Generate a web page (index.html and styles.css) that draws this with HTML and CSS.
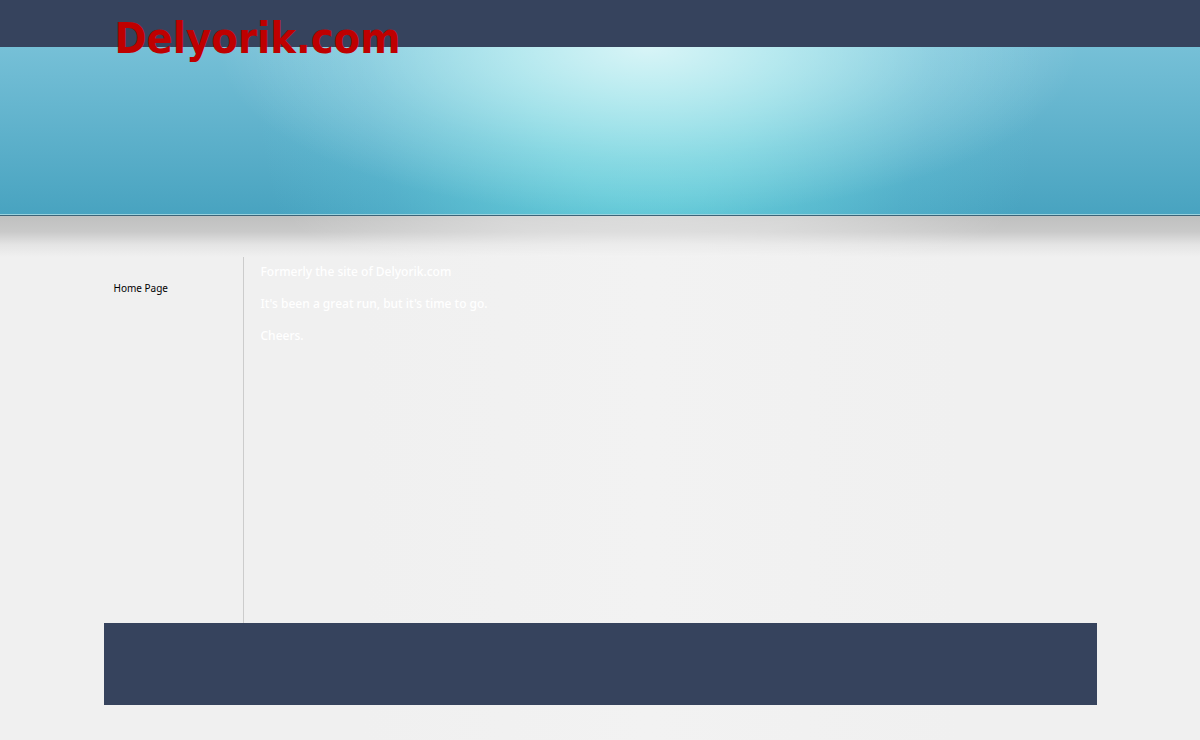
FILE: index.html
```html
<!DOCTYPE html>
<html lang="en">
<head>
    <meta charset="UTF-8">
    <meta name="viewport" content="width=device-width, initial-scale=1.0">
    <title>Delyorik.com</title>
    <link rel="stylesheet" href="styles.css">
</head>
<body>
    <header class="header">
        <div class="wrap">
            <h1 class="title">Delyorik.com</h1>
        </div>
    </header>
    <div class="shadow"></div>

    <div class="wrap columns">
        <nav class="menu">
            <a href="#">Home Page</a>
        </nav>
        <main class="content">
            <p>Formerly the site of Delyorik.com</p>
            <p>It's been a great run, but it's time to go.</p>
            <p>Cheers.</p>
        </main>
    </div>

    <footer class="wrap footer"></footer>
</body>
</html>
```

FILE: styles.css
```css
* {
    box-sizing: border-box;
}
body {
    margin: 0;
    font-family: "Noto Sans", Tahoma, sans-serif;
    background: linear-gradient(to right, #f0f0f0 30%, #f2f2f2 54%, #f0f0f0 80%);
}
.wrap {
    width: 83%;
    max-width: 993px;
    margin: 0 auto;
}

/* dark strip, then the blue banner with the light in the middle */
.header {
    height: 216px;
    border-top: 47px solid #36435d;
    border-bottom: 1px solid #3d6478;
    background:
        linear-gradient(#9bd3de, #9bd3de) bottom / 100% 1px no-repeat,
        radial-gradient(ellipse 36% 170px at 54% 0, rgba(255, 255, 255, 0.7), rgba(255, 255, 255, 0.46) 32%, rgba(255, 255, 255, 0.2) 66%, rgba(255, 255, 255, 0) 100%),
        radial-gradient(ellipse 33% 480px at 54% 0, rgba(125, 228, 232, 0.8), rgba(118, 228, 232, 0.6) 32%, rgba(110, 215, 230, 0.2) 72%, rgba(110, 215, 230, 0) 100%),
        linear-gradient(#76c0d7, #48a3c0);
}
.title {
    margin: -38px 0 0;
    padding-left: 11px;
    font-family: "DejaVu Sans Condensed", Tahoma, sans-serif;
    font-size: 43px;
    line-height: 58px;
    color: #bf0000;
}
.shadow {
    height: 41px;
    background:
        radial-gradient(ellipse 30% 60px at 54% 0, rgba(255, 255, 255, 0.42), rgba(255, 255, 255, 0.34) 40%, rgba(255, 255, 255, 0) 100%),
        linear-gradient(#bfc0bf, #c9c9c9 38%, #e4e4e4 70%, #f0f0f0);
}

.columns {
    display: flex;
    min-height: 366px;
}
.menu {
    width: 140px;
    padding: 23px 10px;
    border-right: 1px solid #cccccc;
    font-size: 10px;
    line-height: 16px;
}
.menu a {
    color: black;
    text-decoration: none;
}
.menu a:hover {
    text-decoration: underline;
}
.content {
    flex: 1;
    padding: 7px 17px;
    font-size: 12px;
    font-weight: 500;
    line-height: 16px;
    color: white;
}
.content p {
    margin: 0 0 16px;
}
.footer {
    height: 82px;
    margin-bottom: 35px;
    background-color: #36435d;
}
```
